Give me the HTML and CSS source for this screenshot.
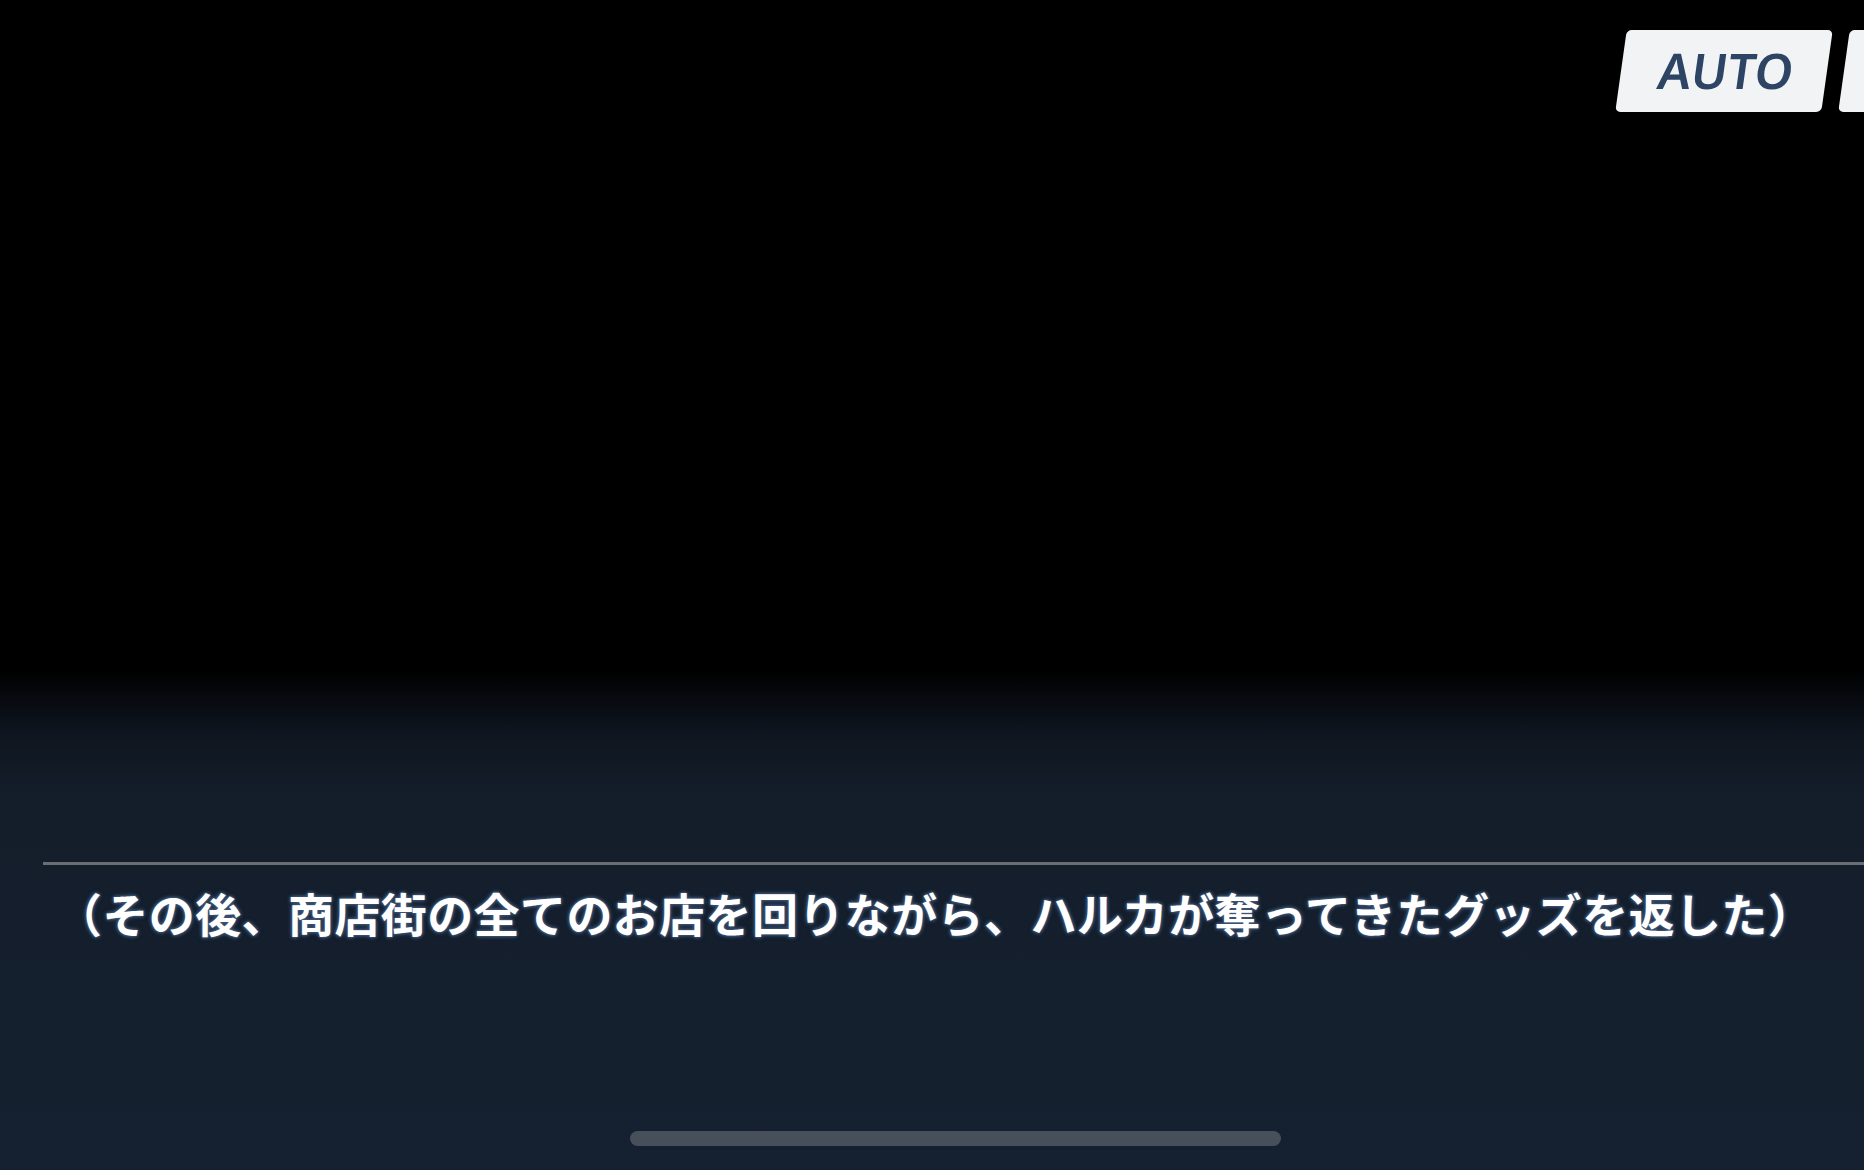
FILE: index.html
```html
<!DOCTYPE html>
<html lang="ja">
<head>
  <meta charset="UTF-8" />
  <meta name="viewport" content="width=device-width, initial-scale=1.0"/>
  <title>Story</title>
  <link rel="stylesheet" href="styles.css">
</head>
<body>
  <div class="screen">
    <div class="toolbar">
      <div class="tool-btn"><span>AUTO</span></div>
      <div class="tool-btn"><span></span></div>
    </div>

    <div class="stage"></div>

    <div class="dialog">
      <div class="rule"></div>
      <p class="line">（その後、商店街の全てのお店を回りながら、ハルカが奪ってきたグッズを返した）</p>
      <div class="home-bar"></div>
    </div>
  </div>
</body>
</html>
```

FILE: styles.css
```css
html, body {
  margin: 0;
  padding: 0;
  height: 100%;
  overflow: hidden;
  font-family: "Noto Sans CJK JP", "Noto Sans", sans-serif;
}

body {
  background: linear-gradient(to bottom, #000 0, #000 670px, #0e151e 730px, #141e2b 800px, #152030 1170px);
  color: #fff;
}

.screen {
  display: flex;
  flex-direction: column;
  height: 100%;
}

.toolbar {
  display: flex;
  justify-content: flex-end;
  gap: 17px;
  padding-top: 30px;
  margin-right: -186px;
}

.tool-btn {
  width: 206px;
  height: 82px;
  background: #f2f3f5;
  border-radius: 5px;
  transform: skewX(-8deg);
  box-shadow: 0 2px 4px rgba(0,0,0,0.4);
  display: flex;
  align-items: center;
  justify-content: center;
}

.tool-btn span {
  font-family: "Noto Sans", sans-serif;
  font-size: 49px;
  font-weight: 600;
  color: #2d4465;
  margin: -2px 0 0 4px;
}

.stage {
  flex: 1;
}

.dialog {
  height: 308px;
  display: flex;
  flex-direction: column;
}

.rule {
  height: 3px;
  margin-left: 43px;
  background: #6a6d71;
}

.line {
  margin: 15px 0 0 56px;
  font-size: 46px;
  line-height: 64px;
  letter-spacing: 0.4px;
  font-weight: 700;
  white-space: nowrap;
  text-shadow:
    0 0 2px #3f5676,
    0 0 3px #3f5676,
    0 0 4px #3f5676,
    0 0 5px #34496a;
}

.home-bar {
  width: 651px;
  height: 15px;
  margin: auto 0 24px 630px;
  border-radius: 8px;
  background: #464f5a;
}
```
